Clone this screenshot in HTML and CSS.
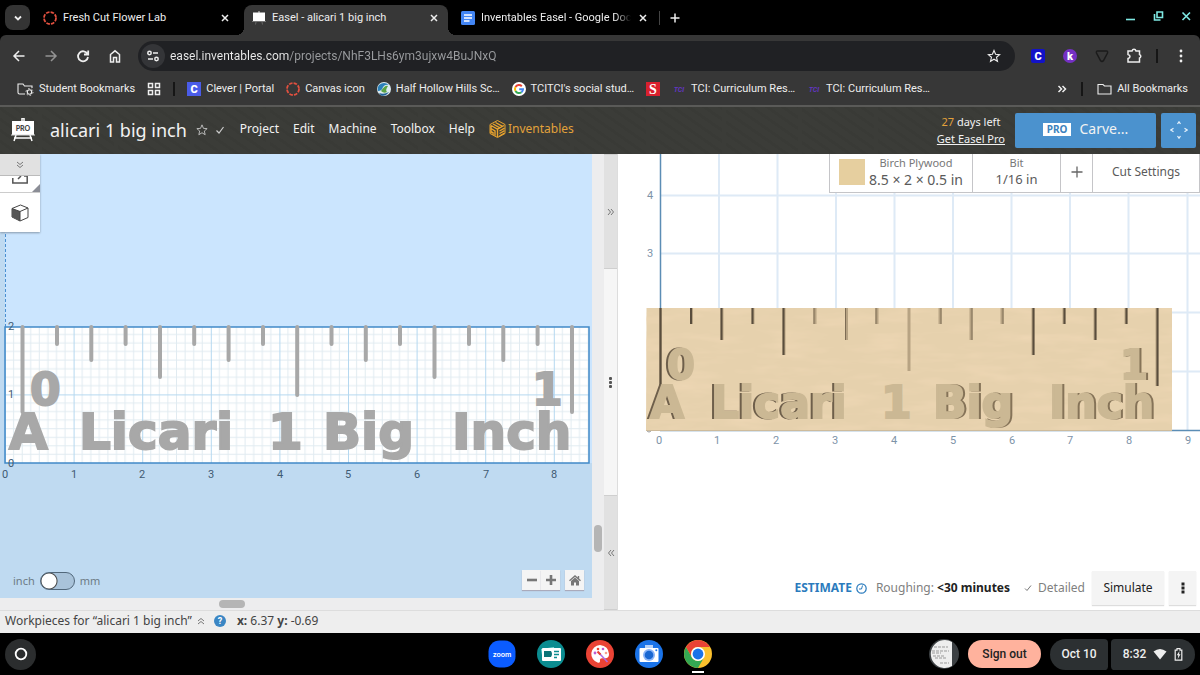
FILE: index.html
```html
<!DOCTYPE html>
<html lang="en">
<head>
<meta charset="utf-8">
<title>Easel - alicari 1 big inch</title>
<link rel="stylesheet" href="styles.css">
</head>
<body>
<div class="tabstrip">
  <button class="tab-search" aria-label="Search tabs"><svg width="10" height="10" viewBox="0 0 10 10"><path d="M2 3.500 5 6.500 8 3.500" class="ln w2"/></svg></button>
  <div class="tab">
    <svg class="fav" viewBox="0 0 14 14"><circle cx="7" cy="7" r="6" class="canvas-ring"/></svg>
    <span class="tab-title">Fresh Cut Flower Lab</span>
    <button class="tab-close" aria-label="Close tab"><svg width="12" height="12" viewBox="0 0 12 12"><path d="M3 3 9 9M9 3 3 9" class="ln"/></svg></button>
  </div>
  <div class="tab active">
    <svg class="fav" viewBox="0 0 14 14"><path d="M4 11 3.500 13.500M10 11 10.500 13.500" stroke="#666"/><path d="M6 0h2v2H6z" fill="#888"/><path d="M1 1.500h12v8.500H1z" fill="#fff"/><path d="M0 10h14v1H0z" fill="#777"/></svg>
    <span class="tab-title">Easel - alicari 1 big inch</span>
    <button class="tab-close" aria-label="Close tab"><svg width="12" height="12" viewBox="0 0 12 12"><path d="M3 3 9 9M9 3 3 9" class="ln"/></svg></button>
  </div>
  <div class="tab">
    <svg class="fav" viewBox="0 0 14 14"><rect width="14" height="14" rx="1.500" fill="#4285f4"/><path d="M3 4h8M3 7h8M3 10h5.500" stroke="#fff" stroke-width="1.300"/></svg>
    <span class="tab-title fade">Inventables Easel - Google Docs</span>
    <button class="tab-close" aria-label="Close tab"><svg width="12" height="12" viewBox="0 0 12 12"><path d="M3 3 9 9M9 3 3 9" class="ln"/></svg></button>
  </div>
  <button class="tab-new" aria-label="New tab"><svg width="12" height="12" viewBox="0 0 12 12"><path d="M6 1.500v9M1.500 6h9" class="ln"/></svg></button>
  <div class="window-controls">
    <button aria-label="Minimize"><svg width="12" height="12" viewBox="0 0 12 12"><path d="M2 9.500h9" class="teal"/></svg></button>
    <button aria-label="Restore"><svg width="12" height="12" viewBox="0 0 12 12"><path d="M5 2h5.500v5.500H5zM2.500 4v6h6" class="teal"/></svg></button>
    <button aria-label="Close"><svg width="12" height="12" viewBox="0 0 12 12"><path d="M2.500 2.500l7.500 7.500M10 2.500 2.500 10" class="teal"/></svg></button>
  </div>
</div>

<div class="toolbar">
  <button class="tool" aria-label="Back"><svg width="14" height="14" viewBox="0 0 14 14"><path d="M12.500 7H2M7 2 2 7l5 5" class="ln"/></svg></button>
  <button class="tool dim" aria-label="Forward"><svg width="14" height="14" viewBox="0 0 14 14"><path d="M1.500 7H12M7 2l5 5-5 5" class="ln"/></svg></button>
  <button class="tool" aria-label="Reload"><svg width="14" height="14" viewBox="0 0 14 14"><path d="M11.500 5A5 5 0 1 0 12 8M12.200 1.500V5.500H8" class="ln w2"/></svg></button>
  <button class="tool" aria-label="Home"><svg width="14" height="14" viewBox="0 0 14 14"><path d="M2.500 5.500 7 1.800l4.500 3.700V13H8.500V8.500h-3V13h-3z" class="ln"/></svg></button>
  <div class="omnibox">
    <button class="site-info" aria-label="Site information"><svg width="14" height="14" viewBox="0 0 14 14"><circle cx="3.500" cy="4" r="1.700" class="ln"/><path d="M7 4h5M2 10h5" class="ln"/><circle cx="10.500" cy="10" r="1.700" class="ln"/></svg></button>
    <input class="url" aria-label="Address" value="easel.inventables.com/projects/NhF3LHs6ym3ujxw4BuJNxQ">
    <button class="bare" aria-label="Bookmark this page"><svg width="14" height="14" viewBox="0 0 14 14"><path d="M7 1.500 8.600 5.300l4 .3-3.100 2.700 1 4L7 10.200l-3.500 2.100 1-4L1.400 5.600l4-.3z" class="ln thin"/></svg></button>
  </div>
  <div class="extensions">
    <button class="tool" aria-label="Clever"><svg width="14" height="14" viewBox="0 0 14 14"><rect width="14" height="14" rx="2" fill="#1212c8"/><text x="7" y="11" class="mark" font-size="11">C</text></svg></button>
    <button class="tool" aria-label="Kami"><svg width="14" height="14" viewBox="0 0 14 14"><circle cx="7" cy="7" r="7" fill="#7530c4"/><text x="7" y="11" class="mark" font-size="11">k</text></svg></button>
    <button class="tool" aria-label="Shield"><svg width="14" height="14" viewBox="0 0 14 14"><path d="M2.500 2h9Q13 2 12.500 4L8.500 11.500Q7 13.500 5.500 11.500L1.500 4Q1 2 2.500 2z" fill="none" stroke="#1b1b1b" stroke-width="1.500"/></svg></button>
    <button class="tool" aria-label="Extensions"><svg width="16" height="16" viewBox="0 0 16 16"><path d="M2 3h4Q6.500 1.200 8 1.200T10 3h3.500v3.500q1.300.4 1.300 1.800T13.500 10v4H2v-3.500q2-.5 2-2T2 6.500z" class="ln"/></svg></button>
    <span class="vbar"></span>
    <button class="tool more" aria-label="Menu"><svg width="4" height="14" viewBox="0 0 4 14" fill="#eee"><circle cx="2" cy="2" r="1.400"/><circle cx="2" cy="7" r="1.400"/><circle cx="2" cy="12" r="1.400"/></svg></button>
  </div>
</div>

<nav class="bookmarks" aria-label="Bookmarks">
  <a href="#" class="bm"><svg width="17" height="14" viewBox="0 0 17 14"><path d="M8 12H2.500Q1 12 1 10.500V2h5l1.500 2H15v2" class="ln thin"/><circle cx="12.500" cy="10" r="2.200" class="ln thin"/><circle cx="12.500" cy="10" r="3.500" fill="none" stroke="#ddd" stroke-dasharray="1.500 2.160"/></svg>Student Bookmarks</a>
  <a href="#" class="bm" aria-label="Apps"><svg width="14" height="14" viewBox="0 0 14 14"><path d="M1.500 1.500h4v4h-4zM8.500 1.500h4v4h-4zM1.500 8.500h4v4h-4zM8.500 8.500h4v4h-4z" class="ln"/></svg></a>
  <span class="vbar"></span>
  <a href="#" class="bm"><svg width="14" height="14" viewBox="0 0 14 14"><rect width="14" height="14" fill="#4a5ce8"/><text x="7" y="11" class="mark" font-size="11">C</text></svg>Clever | Portal</a>
  <a href="#" class="bm"><svg width="14" height="14" viewBox="0 0 14 14"><circle cx="7" cy="7" r="6" class="canvas-ring"/></svg>Canvas icon</a>
  <a href="#" class="bm"><svg width="14" height="14" viewBox="0 0 14 14"><circle cx="7" cy="7" r="7" fill="#dceaf0"/><path d="M2 3Q7-1 12 3 8 2 6 5 5 9 1 9 0 6 2 3z" fill="#2a80b9"/><path d="M4 9q4-6 7-5Q8 8 10 10q-3 2-6-1z" fill="#5aa345"/><path d="M2 11q5 2 10-1-4 5-8 3.500z" fill="#1e5f95"/></svg>Half Hollow Hills Sc…</a>
  <a href="#" class="bm"><svg width="14" height="14" viewBox="0 0 14 14"><circle cx="7" cy="7" r="7" fill="#fff"/><g fill="none" stroke-width="2"><path d="M9.800 4.200A4 4 0 0 0 3.500 5" stroke="#ea4335"/><path d="M3.500 5a4 4 0 0 0 0 4" stroke="#fbbc05"/><path d="M3.500 9a4 4 0 0 0 6 1.200" stroke="#34a853"/><path d="M9.500 10.200A4 4 0 0 0 11 7.200H7.200" stroke="#4285f4"/></g></svg>TCITCI's social stud…</a>
  <a href="#" class="bm" aria-label="Scholastic"><svg width="14" height="14" viewBox="0 0 14 14"><rect width="14" height="14" fill="#d9202e"/><text x="7" y="12" class="mark slab" font-size="14">S</text></svg></a>
  <a href="#" class="bm"><svg width="14" height="14" viewBox="0 0 14 14"><text x="7" y="9.500" class="tci">TCI</text></svg>TCI: Curriculum Res…</a>
  <a href="#" class="bm"><svg width="14" height="14" viewBox="0 0 14 14"><text x="7" y="9.500" class="tci">TCI</text></svg>TCI: Curriculum Res…</a>
  <div class="bm-end">
    <button class="bare" aria-label="More bookmarks"><svg width="10" height="10" viewBox="0 0 10 10"><path d="M1.500 2 4.500 5l-3 3M5.500 2l3 3-3 3" class="ln"/></svg></button>
    <span class="vbar"></span>
    <a href="#" class="bm"><svg width="15" height="14" viewBox="0 0 15 14"><path d="M1 2.500h5L7.500 4H14v8H1z" class="ln thin"/></svg>All Bookmarks</a>
  </div>
</nav>

<header class="easel-bar">
  <svg class="easel-logo" width="24" height="24" viewBox="0 0 24 24"><path d="M11 3V0h2v3M5 17 3 23M19 17l2 6M3 20h18" fill="none" stroke="#fff" stroke-width="1.500"/><rect x="1" y="3" width="22" height="14" fill="#fff"/><path d="M0 17h24" stroke="#ddd"/><text x="12" y="13" class="logo-pro">PRO</text></svg>
  <h1 class="project-name">alicari 1 big inch</h1>
  <button class="bare star" aria-label="Favorite"><svg width="12" height="12" viewBox="0 0 14 14"><path d="M7 1 8.700 5.100l4.300.3-3.300 2.800 1 4.300L7 10.200l-3.700 2.300 1-4.300L1 5.400l4.300-.3z" fill="none" stroke="#ccc"/></svg></button>
  <svg class="saved" width="10" height="10" viewBox="0 0 10 10"><path d="M1.500 5.500 4 8l4.500-6" fill="none" stroke="#ccc" stroke-width="1.200"/></svg>
  <nav class="menu" aria-label="Main">
    <button>Project</button><button>Edit</button><button>Machine</button><button>Toolbox</button><button>Help</button>
    <a href="#"><svg width="17" height="18" viewBox="0 0 17 18"><path d="M8.500.5 16 4.500v9L8.500 17.500 1 13.500v-9z" fill="none" stroke="#e8a32e"/><path d="M2 5.500l6.500 3.700v7.800M15 5.500 8.500 9.200M2 8.500l4 2.300v5M2 11.500l2 1.200v2.300M10.500 11l5-2.800M10.500 13.500l5-2.800M10.500 16l5-2.800M4 4l7 3.800M6.500 2.500l7 3.800M2 5.500v8" fill="none" stroke="#e8a32e" stroke-width="1.400"/></svg>Inventables</a>
  </nav>
  <div class="trial"><span><b>27</b> days left</span><a href="#">Get Easel Pro</a></div>
  <button class="carve"><span class="badge">PRO</span>Carve...</button>
  <button class="jog" aria-label="Jog machine"><svg width="18" height="18" viewBox="0 0 18 18"><path d="M7.500 3 9 .8 10.500 3M7.500 15 9 17.200 10.500 15M3.500 7.300.800 9l2.700 1.700M14.500 7.300 17.200 9l-2.700 1.700" fill="none" stroke="#e5f1fb" stroke-width="1.200"/></svg></button>
</header>

<main class="workspace">
  <section class="design" aria-label="Design">
    <svg class="scene" viewBox="0 0 592 444" preserveAspectRatio="xMinYMin slice">
      <defs>
        <pattern id="grid" x="5" y="309" width="68.600" height="68.600" patternUnits="userSpaceOnUse">
          <path d="M8.600 0V69M17.200 0V69M25.700 0V69M34.300 0V69M42.900 0V69M51.500 0V69M60 0V69M0 8.600H69M0 17.200H69M0 25.700H69M0 34.300H69M0 42.900H69M0 51.500H69M0 60H69" stroke="#e1ebf1" stroke-width="1"/>
          <path d="M.5 0V69M0 .5H69" stroke="#b5d8f0"/>
        </pattern>
      </defs>
      <rect width="592" height="444" fill="#bfdaf1"/>
      <rect x="5" width="587" height="309" fill="#cbe5fe"/>
      <path d="M5.500 0V173" stroke="#4a90d2" stroke-dasharray="3 2"/>
      <rect x="5" y="173" width="584" height="136" fill="#fff"/>
      <rect x="5" y="173" width="584" height="136" fill="url(#grid)" stroke="#4189c7" stroke-width="1.500"/>
      <path class="slots" d="M22.500 173V258M57 173V190M91.300 173V206M125.600 173V190M160 173V223M194.200 173V190M228.600 173V206M263 173V190M297.200 173V241M331.500 173V190M365.800 173V206M400 173V190M434.500 173V223M469 173V190M503.300 173V206M537.600 173V190M572 173V258"/>
      <g class="carved">
        <text class="digit" x="30" y="251">0</text><text class="digit" x="532" y="251">1</text>
        <text y="295"><tspan x="9">A</tspan> <tspan x="79">Licari</tspan> <tspan x="268">1</tspan> <tspan x="323">Big</tspan> <tspan x="452">Inch</tspan></text>
      </g>
      <g class="axis dark">
        <text x="11" y="176">2</text><text x="11" y="244">1</text><text x="11" y="313">0</text>
        <text x="5" y="324">0</text><text x="74" y="324">1</text><text x="142" y="324">2</text><text x="211" y="324">3</text><text x="280" y="324">4</text><text x="348" y="324">5</text><text x="417" y="324">6</text><text x="486" y="324">7</text><text x="554" y="324">8</text>
      </g>
    </svg>
    <div class="tool-panel">
      <button class="panel-scroll" aria-label="Scroll tools"><svg width="8" height="8" viewBox="0 0 8 8"><path d="M1 1l3 2.500L7 1M1 4l3 2.500L7 4" class="gray"/></svg></button>
      <button class="panel-import" aria-label="Import"><svg width="16" height="8" viewBox="0 0 16 8"><path d="M.8 2v5h14.400V0H12M6 3l3-3" fill="none" stroke="#555" stroke-width="1.500"/></svg></button>
      <button class="panel-box" aria-label="3D objects"><svg width="18" height="18" viewBox="0 0 18 18"><path d="M1 4.500 9.500 1 17 4v9.500L9 17 1 13z" fill="#fff" stroke="#444"/><path d="M1 4.500 9 7.500V17L1 13z" fill="#555"/><path d="M1 4.500 9 7.500 17 4M9 7.500V17" fill="none" stroke="#444"/></svg></button>
    </div>
    <label class="units"><span>inch</span><input type="checkbox" role="switch" aria-label="Use millimetres"><span>mm</span></label>
    <div class="zoom">
      <div class="zoom-pair"><button aria-label="Zoom out"><svg width="10" height="10" viewBox="0 0 10 10"><path d="M0 5h10" class="fat"/></svg></button><button aria-label="Zoom in"><svg width="10" height="10" viewBox="0 0 10 10"><path d="M0 5h10M5 0v10" class="fat"/></svg></button></div>
      <button aria-label="Fit view"><svg width="12" height="11" viewBox="0 0 12 11"><path d="M6 2.500 2 6v4.500h3V7.500h2v3h3V6z" fill="#777"/><path d="M.5 5.800 6 1l5.500 4.800M9.500 1v3" fill="none" stroke="#777" stroke-width="1.400"/></svg></button>
    </div>
  </section>
  <div class="vtrack"><span class="vthumb"></span></div>
  <div class="htrack"><span class="hthumb"></span></div>
  <div class="splitter">
    <button aria-label="Expand design"><svg width="8" height="8" viewBox="0 0 8 8"><path d="M1 1l2.500 3L1 7M4 1l2.500 3L4 7" class="gray"/></svg></button>
    <span class="grip"><i></i><i></i><i></i></span>
    <button aria-label="Expand preview"><svg width="8" height="8" viewBox="0 0 8 8"><path d="M4 1 1.500 4 4 7M7 1 4.500 4 7 7" class="gray"/></svg></button>
  </div>
  <section class="preview" aria-label="Preview">
    <svg class="scene" viewBox="0 0 582 456" preserveAspectRatio="xMinYMin slice">
      <defs>
        <filter id="grain" x="0" y="0" width="100%" height="100%"><feTurbulence type="fractalNoise" baseFrequency="0.02 0.1" numOctaves="3" seed="4"/><feColorMatrix values="0 0 0 0 .86  0 0 0 0 .68  0 0 0 0 .46  1.800 0 0 0 -.8"/></filter>
      </defs>
      <path d="M101 0V276M159.500 0V276M218 0V276M276.500 0V276M335 0V276M393.500 0V276M452 0V276M510.500 0V276M569.500 0V276M42 41.500H582M42 99.500H582M42 158.500H582M42 217.500H582" stroke="#deeaf6" stroke-width="2" fill="none"/>
      <path d="M42.500 0V276M42 276.500H582" stroke="#5b8db5" stroke-width="1.500" fill="none"/>
      <circle cx="31" cy="276" r="2" fill="none" stroke="#999"/>
      <path d="M28.500 154H554V277H28z" fill="#e6d1ad"/>
      <rect x="28" y="154" width="526" height="123" filter="url(#grain)"/>
      <path d="M28 276.500H554" stroke="#cdbb9c"/>
      <path class="groove" d="M42.500 154V232M73.500 154V170M104 154V186M135 154V170M166 154V201M197 154V170M228.500 154V186M259 154V170M291 154V217M322 154V170M353 154V186M384 154V170M415 154V201M446 154V170M477 154V186M508 154V170M539 154V232"/>
      <path class="shade" d="M42.500 154V232M73 154V170M103.500 154V186M134.500 154V170M165.500 154V201M446.500 154V170M477.500 154V186M508.500 154V170M539.500 154V232M415.500 154V201"/>
      <path class="shade faint" d="M196 154V170M227.500 154V186M258 154V170M323 154V170M354 154V186M385 154V170"/>
      <g class="routed lit-right">
        <text class="digit" x="49" y="225">0</text>
        <text y="264"><tspan x="32">A</tspan> <tspan x="93">Licari</tspan></text>
      </g>
      <g class="routed"><text x="263" y="264">1</text></g>
      <g class="routed lit-left">
        <text class="digit" x="502" y="225">1</text>
        <text y="264"><tspan x="315">Big</tspan> <tspan x="431">Inch</tspan></text>
      </g>
      <g class="axis">
        <text x="32" y="45">4</text><text x="32" y="103">3</text>
        <text x="41" y="290">0</text><text x="99" y="290">1</text><text x="158" y="290">2</text><text x="217" y="290">3</text><text x="276" y="290">4</text><text x="335" y="290">5</text><text x="394" y="290">6</text><text x="452" y="290">7</text><text x="511" y="290">8</text><text x="570" y="290">9</text>
      </g>
    </svg>
    <div class="settings">
      <button class="material"><i class="swatch"></i><span class="pair"><small>Birch Plywood</small><span>8.5 × 2 × 0.5 in</span></span></button>
      <button class="bit"><span class="pair"><small>Bit</small><span>1/16 in</span></span></button>
      <button class="add" aria-label="Add bit"><svg width="12" height="12" viewBox="0 0 12 12"><path d="M6 .5v11M.5 6h11" stroke="#666" stroke-width="1.300"/></svg></button>
      <button class="cut">Cut Settings</button>
    </div>
    <div class="simulate-bar">
      <button class="estimate">ESTIMATE <svg width="11" height="11" viewBox="0 0 11 11"><circle cx="5.500" cy="5.500" r="4.700" fill="none" stroke="#2a7bbd" stroke-width="1.200"/><path d="M6.500 2.500 5.500 6H3" fill="none" stroke="#2a7bbd"/></svg></button>
      <span class="rough">Roughing: <b>&lt;30 minutes</b></span>
      <span class="detail"><svg width="8" height="8" viewBox="0 0 8 8"><path d="M1 4.500 3 6.500 7 1.500" fill="none" stroke="#777"/></svg>Detailed</span>
      <button class="flat">Simulate</button>
      <button class="flat dots" aria-label="Simulation options"><svg width="4" height="12" viewBox="0 0 4 12" fill="#222"><path d="M.5.500h3v3h-3zM.5 4.500h3v3h-3zM.5 8.500h3v3h-3z"/></svg></button>
    </div>
  </section>
</main>

<footer class="status">
  <button class="workpieces">Workpieces for “alicari 1 big inch” <svg width="8" height="8" viewBox="0 0 8 8"><path d="M1 4l3-2.500L7 4M1 7l3-2.500L7 7" class="gray"/></svg></button>
  <button class="help" aria-label="Help">?</button>
  <span><b>x:</b> 6.37 <b>y:</b> -0.69</span>
</footer>

<div class="shelf">
  <button class="launcher" aria-label="Launcher"><svg width="14" height="14" viewBox="0 0 14 14"><circle cx="7" cy="7" r="5.300" fill="none" stroke="#fff" stroke-width="1.800"/></svg></button>
  <div class="apps">
    <button aria-label="Zoom"><svg viewBox="0 0 28 28"><rect x=".5" y=".5" width="27" height="27" rx="11" fill="#0b5cff"/><text x="14" y="16.500" class="zoom-word">zoom</text></svg></button>
    <button aria-label="Screencast"><svg viewBox="0 0 28 28"><circle cx="14" cy="14" r="14" fill="#0b8c90"/><path d="M4 9l13-2 1 12-12 2z" fill="#7edcd8"/><rect x="5" y="8" width="19" height="13" rx="1" fill="#fff"/><path d="M7 11h7q2 3 0 6H7z" fill="#0b7478"/><path d="M17 11.500h5M17 14.500h5M17 17.500h3" stroke="#0b8c90" stroke-width="1.500"/></svg></button>
    <button aria-label="Canvas"><svg viewBox="0 0 28 28"><circle cx="14" cy="14" r="14" fill="#ea4335"/><path d="M14 5a9 9 0 0 0-2 17.700q2.500.3 2-2-.5-2.500 2-2.500h4q3-.5 3-4.200Q22.500 6 14 5z" fill="#fff"/><circle cx="9" cy="13" r="1.400" fill="#c05bd0"/><circle cx="12" cy="9" r="1.300" fill="#ea4335"/><circle cx="17" cy="9" r="1.300" fill="#c05bd0"/><circle cx="20" cy="13" r="1.300" fill="#f6a08e"/><path d="M13 13l8.500 9" stroke="#b06be0" stroke-width="1.600"/><path d="M11.500 11.500l3 3" stroke="#ea4335" stroke-width="2.200"/></svg></button>
    <button aria-label="Camera"><svg viewBox="0 0 28 28"><circle cx="14" cy="14" r="14" fill="#1a73e8"/><path d="M10 5h8v4h-8z" fill="#b8d2f8"/><rect x="4.500" y="8" width="19" height="14" rx="1" fill="#fff"/><circle cx="14" cy="15" r="6" fill="#8ab4f8"/><circle cx="14" cy="15" r="4.300" fill="#1967d2"/><circle cx="21.300" cy="10.200" r="1" fill="#1a73e8"/></svg></button>
    <button class="running" aria-label="Chrome"><svg viewBox="0 0 28 28"><circle cx="14" cy="14" r="14" fill="#fbc02d"/><path d="M1.900 7A14 14 0 0 1 26.100 7H14a7 7 0 0 0-6.100 10.500z" fill="#ea4335"/><path d="M1.900 7A14 14 0 0 0 14 28l6-10.500A7 7 0 0 1 7.900 17.500z" fill="#34a853"/><circle cx="14" cy="14" r="7" fill="#fff"/><circle cx="14" cy="14" r="5.400" fill="#1a73e8"/></svg></button>
  </div>
  <div class="tray">
    <button class="recent" aria-label="Recent file"><svg width="30" height="30" viewBox="0 0 30 30"><circle cx="15" cy="15" r="15" fill="#3c4043"/><path d="M23 3A14 14 0 1 0 23 27z" fill="#eee"/><path d="M5 8h14M3 12h17M3 14h9M4 17h11M6 19h12M11 24h9" stroke="#999" stroke-dasharray="3 1"/></svg></button>
    <button class="signout">Sign out</button>
    <button class="pill date">Oct 10</button>
    <button class="pill clock">8:32 <svg width="14" height="12" viewBox="0 0 14 12"><path d="M.5 3.500Q7-1.500 13.500 3.500L7 11.500z" fill="#eee"/></svg><svg width="9" height="13" viewBox="0 0 9 13"><path d="M3 .7h3v1.500h1.800v10H1.200v-10H3z" fill="none" stroke="#eee" stroke-width="1.200"/><path d="M5.500 3 2.700 7.300h1.600L3.700 11 6.500 6.300H5z" fill="#eee"/></svg></button>
  </div>
</div>
</body>
</html>
```

FILE: styles.css
```css
* { box-sizing: border-box; }
body {
  margin: 0;
  min-height: 100vh;
  display: flex;
  flex-direction: column;
  background: #000;
  font: 12px/16px "Noto Sans", sans-serif;
  color: #444;
}
button {
  font: inherit;
  color: inherit;
  background: none;
  border: 0;
  padding: 0;
  display: flex;
  align-items: center;
  justify-content: center;
  white-space: nowrap;
}
a { color: inherit; text-decoration: none; }
svg { flex: none; }
.ln { fill: none; stroke: #eee; stroke-width: 1.5; }
.ln.w2 { stroke-width: 1.8; }
.ln.thin { stroke-width: 1.1; }
.teal { fill: none; stroke: #7fe9e4; stroke-width: 1.6; }
.gray { fill: none; stroke: #777; stroke-width: 1; }
.canvas-ring { fill: none; stroke: #e2503f; stroke-width: 1.8; stroke-dasharray: 3.5 1.2; }
.mark { fill: #fff; font-family: Roboto, sans-serif; font-weight: 900; text-anchor: middle; }
.mark.slab { font-family: "Liberation Serif", serif; }
.tci { fill: #6236c0; font: italic 700 7px Roboto, sans-serif; text-anchor: middle; }

/* Browser frame */
.tabstrip {
  height: 35px;
  display: flex;
  align-items: center;
  padding-left: 5px;
  color: #eee;
  font: 11px/16px Roboto, sans-serif;
}
.tab-search { width: 25px; height: 25px; border-radius: 8px; background: #343434; margin-right: 5px; }
.tab {
  width: 209px;
  height: 30px;
  margin-top: 5px;
  padding: 0 13px 5px 8px;
  display: flex;
  align-items: center;
  gap: 6px;
}
.tab.active { position: relative; width: 204px; padding-right: 8px; background: #373737; border-radius: 8px 8px 0 0; }
.tab.active + .tab { margin-left: 5px; }
.tab.active::before, .tab.active::after {
  content: "";
  position: absolute;
  bottom: 0;
  width: 8px;
  height: 8px;
}
.tab.active::before { left: -8px; background: radial-gradient(circle at 0 0, #000 8px, #373737 8px); }
.tab.active::after { right: -8px; background: radial-gradient(circle at 100% 0, #000 8px, #373737 8px); }
.fav { width: 14px; height: 14px; }
.tab-title { flex: 1; overflow: hidden; white-space: nowrap; }
.fade { mask-image: linear-gradient(to right, #000 134px, transparent 150px); }
.tab-new { width: 30px; height: 14px; border-left: 1px solid #444; margin-left: -3px; }
.window-controls { margin-left: auto; display: flex; gap: 16px; padding: 0 8px 4px 0; }
.toolbar {
  height: 36px;
  display: flex;
  align-items: center;
  padding: 6px 0 0 3px;
  background: #373737;
  border-radius: 6px 6px 0 0;
}
.tool { width: 32px; height: 30px; }
.dim { opacity: .5; }
.omnibox {
  flex: 1;
  height: 30px;
  margin-left: 7px;
  padding: 0 14px 0 3px;
  display: flex;
  align-items: center;
  gap: 5px;
  border-radius: 15px;
  background: #202124;
}
.site-info { width: 24px; height: 24px; border-radius: 12px; background: #343538; }
.url {
  flex: 1;
  min-width: 0;
  border: 0;
  padding: 0;
  font: 12px/18px Roboto, sans-serif;
  color: transparent;
  background: linear-gradient(to right, #eee 119px, #9b9da0 119px);
  background-clip: text;
}
.extensions { display: flex; align-items: center; padding-left: 7px; }
.vbar { width: 2px; height: 14px; background: #161616; }
.extensions .vbar { margin-left: 6px; }
.more { margin: 0 3px 0 7px; }
.bookmarks {
  height: 36px;
  display: flex;
  align-items: center;
  gap: 12px;
  padding: 1px 12px 0 17px;
  background: #373737;
  border-bottom: 2px solid #5a5a58;
  color: #eee;
  font: 11px/16px Roboto, sans-serif;
  white-space: nowrap;
}
.bm { display: flex; align-items: center; gap: 5px; }
.bm-end { margin-left: auto; display: flex; align-items: center; gap: 14px; }

/* Easel header */
.easel-bar {
  height: 47px;
  display: flex;
  align-items: center;
  padding: 0 4px 1px 11px;
  color: #f2f2f2;
  background-color: #3b3c38;
  background-image:
    repeating-linear-gradient(90deg, transparent 0 38px, #3b3c38 38px 42px, transparent 42px 76px),
    repeating-linear-gradient(35deg, #393a36 0 3px, transparent 3px 9px);
}
.logo-pro { font: 900 7px Lato, sans-serif; fill: #444; text-anchor: middle; }
.project-name { margin: 0 0 0 15px; font: 400 18px/24px "Noto Sans", sans-serif; white-space: nowrap; }
.star { margin-left: 9px; }
.saved { margin-left: 7px; }
.menu { display: flex; align-items: center; gap: 14px; margin-left: 15px; padding-bottom: 2px; line-height: 18px; }
.menu a { display: flex; align-items: center; gap: 2px; color: #e2a23b; }
.trial { margin-left: auto; display: flex; flex-direction: column; align-items: center; font-size: 11px; line-height: 17px; white-space: nowrap; }
.trial b { font-weight: 400; color: #e2a23b; }
.trial a { text-decoration: underline; }
.carve {
  width: 141px;
  height: 35px;
  margin-left: 10px;
  padding-bottom: 2px;
  gap: 8px;
  background: #4b92ce;
  border-radius: 2px;
  font-size: 14px;
}
.badge { padding: 0 4px; background: #fff; color: #3c82bd; font-size: 10px; line-height: 13px; font-weight: 700; }
.jog { width: 35px; height: 35px; margin-left: 5px; background: #4b92ce; border-radius: 2px; }

/* Workspace */
.workspace {
  flex: 1;
  display: grid;
  grid-template-columns: minmax(0, 592fr) 12px 14px minmax(0, 582fr);
  grid-template-rows: minmax(0, 1fr) 12px;
  background: #eee;
}
.design, .preview { position: relative; overflow: hidden; }
.preview { grid-column: 4; grid-row: 1 / 3; background: #fff; }
.scene { position: absolute; inset: 0; width: 100%; height: 100%; }
.slots { fill: none; stroke: #a8a8a8; stroke-width: 4; stroke-linecap: round; }
.carved {
  fill: #a8a8a8;
  stroke: #a8a8a8;
  stroke-width: 2;
  font: 700 50px "DejaVu Sans", sans-serif;
}
.carved .digit { font-size: 44px; }
.axis { font: 11px Roboto, sans-serif; fill: #7d93a8; text-anchor: middle; }
.axis.dark { fill: #3f5b73; }
.groove { fill: none; stroke: #b7a383; stroke-width: 3; }
.shade { fill: none; stroke: #594d3d; stroke-width: 2; }
.shade.faint { stroke: #7d6c55; stroke-width: 1; }
.routed { fill: #cbb894; stroke: #cbb894; stroke-width: 2; font: 700 44px "DejaVu Sans", sans-serif; }
.routed .digit { font-size: 40px; }
.lit-right { filter: drop-shadow(-2px 0 0 #6e5f4b); }
.lit-left { filter: drop-shadow(2px 0 0 #857358); }
.tool-panel { position: absolute; top: 0; left: 0; width: 40px; background: #fff; box-shadow: 0 1px 2px #8899aa; }
.tool-panel button { width: 100%; position: relative; }
.panel-scroll { height: 22px; background: #e1e1e1; border-bottom: 1px solid #bbb; }
.panel-import { height: 17px; border-bottom: 1px solid #ccc; padding-bottom: 8px; }
.panel-import::after {
  content: "";
  position: absolute;
  right: 0;
  bottom: 0;
  border: 4px solid #8b8d96;
  border-top-color: transparent;
  border-left-color: transparent;
}
.panel-box { height: 39px; }
.units { position: absolute; left: 13px; bottom: 8px; display: flex; align-items: center; gap: 5px; font-size: 11px; color: #6d7a85; }
.units input {
  appearance: none;
  width: 35px;
  height: 18px;
  margin: 0;
  border: 1px solid #51677a;
  border-radius: 9px;
  background: radial-gradient(circle at 8px 8px, #fff 7px, #444 8px, #a9c3da 9px);
}
.zoom { position: absolute; right: 8px; bottom: 8px; display: flex; gap: 5px; }
.zoom button { width: 19px; height: 20px; background: #f4f4f4; box-shadow: 0 1px 1px #aab; }
.zoom-pair { display: flex; }
.fat { stroke: #777; stroke-width: 2.6; }
.vtrack { display: flex; justify-content: center; align-items: flex-end; grid-row: 1 / 3; background: #ededee; padding-bottom: 58px; }
.vthumb { width: 8px; height: 27px; border-radius: 4px; background: #b5b5b5; }
.htrack { grid-column: 1; grid-row: 2; display: flex; align-items: center; padding-left: 37%; background: #ededee; }
.hthumb { width: 26px; height: 8px; border-radius: 4px; background: #b5b5b5; }
.splitter { grid-column: 3; grid-row: 1 / 3; display: flex; flex-direction: column; background: #f6f6f6; border-right: 1px solid #ddd; }
.splitter button { flex: 1; background: #e1e1e1; border: 1px solid #cfcfcf; border-width: 1px 0; }
.grip { flex: 2; display: flex; flex-direction: column; align-items: center; justify-content: center; gap: 1px; }
.grip i { width: 3px; height: 3px; background: #555; border-radius: 1px; }
.settings {
  position: absolute;
  top: 0;
  right: 0;
  height: 39px;
  display: flex;
  background: #fff;
  border: 1px solid #c5c5c8;
  border-top: 0;
  color: #5a5a5a;
}
.settings button { padding-bottom: 3px; font-size: 13px; line-height: 17px; }
.settings button + button { border-left: 1px solid #c5c5c8; }
.pair { display: flex; flex-direction: column; align-items: center; }
.pair small { font-size: 11px; line-height: 16px; color: #777; }
.material { width: 142px; gap: 4px; }
.settings .material { font-size: 14px; }
.swatch { width: 26px; height: 26px; background: #e6cf9f; }
.bit { width: 88px; }
.add { width: 32px; }
.settings .cut { width: 107px; font-size: 12px; }
.simulate-bar { position: absolute; right: 4px; bottom: 5px; display: flex; align-items: center; color: #222; white-space: nowrap; }
.estimate { gap: 4px; color: #2a7bbd; font-weight: 700; margin-right: 9px; }
.rough, .detail { color: #808080; }
.rough b { color: #222; }
.detail { display: flex; align-items: center; gap: 6px; margin: 0 7px 0 14px; }
.flat { width: 72px; height: 34px; background: #f4f4f4; box-shadow: 0 1px 1px #ddd; }
.dots { width: 27px; margin-left: 5px; }
.status { height: 23px; display: flex; align-items: center; padding: 0 5px 2px; background: #eee; border-top: 1px solid #ddd; }
.workpieces { gap: 5px; }
.help { width: 12px; height: 12px; margin: 0 11px 0 9px; border-radius: 6px; background: #3a86c4; color: #fff; font: 700 9px/12px Roboto, sans-serif; }

/* Shelf */
.shelf {
  height: 42px;
  display: grid;
  grid-template-columns: 1fr auto 1fr;
  align-items: center;
  padding: 0 5px;
  background: #000;
  color: #eee;
  font: 500 12px/16px Roboto, sans-serif;
}
.launcher { width: 31px; height: 31px; border-radius: 50%; background: #2b2d2e; }
.apps { display: flex; gap: 21px; }
.apps button { width: 28px; height: 28px; position: relative; }
.apps svg { width: 28px; height: 28px; }
.zoom-word { font: 600 7px Inter, sans-serif; fill: #fff; text-anchor: middle; }
.running::after { content: ""; position: absolute; left: 8px; bottom: -5px; width: 12px; height: 2px; background: #fff; }
.tray { display: flex; justify-content: flex-end; align-items: center; }
.signout { width: 73px; height: 28px; margin: 0 9px; border-radius: 14px; background: #ffb29d; color: #222; }
.pill { height: 31px; background: #2c3032; }
.date { width: 58px; border-radius: 16px 4px 4px 16px; }
.clock { width: 84px; margin-left: 3px; gap: 7px; border-radius: 4px 16px 16px 4px; }
```
